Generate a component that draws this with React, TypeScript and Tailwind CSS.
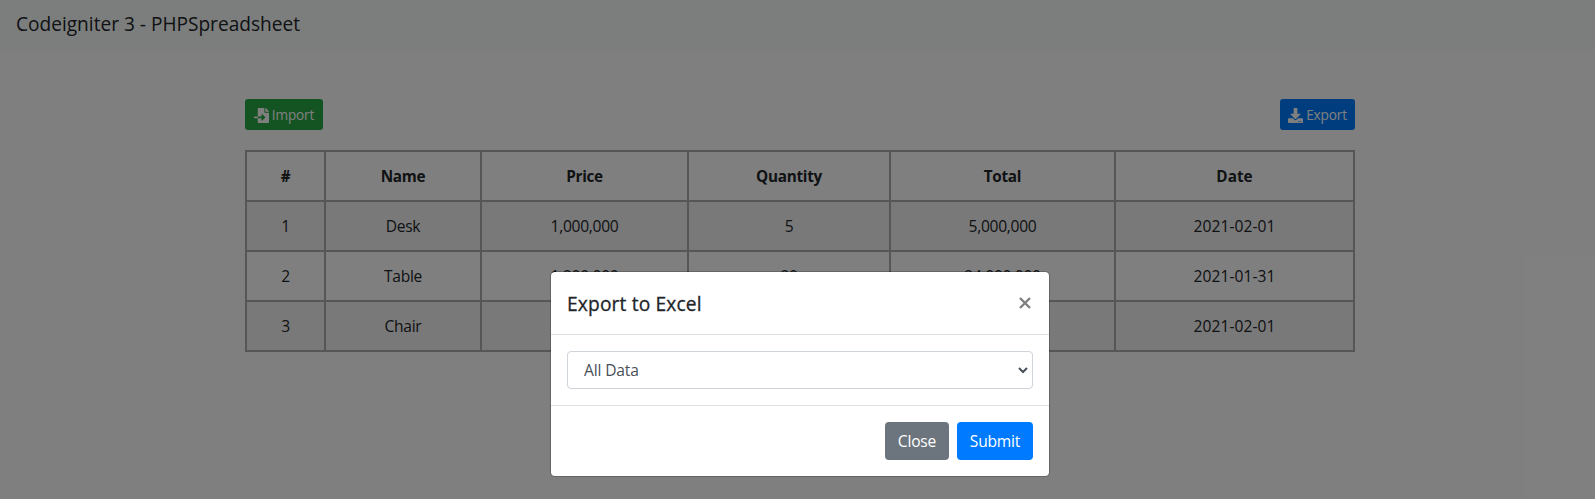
import { FaDownload, FaFileImport } from "react-icons/fa";

const columns = [
  { label: "#", width: "w-[81px]" },
  { label: "Name", width: "w-[156px]" },
  { label: "Price", width: "w-[207px]" },
  { label: "Quantity", width: "w-[202px]" },
  { label: "Total", width: "w-[225px]" },
  { label: "Date", width: "w-[239px]" },
];

const rows = [
  ["1", "Desk", "1,000,000", "5", "5,000,000", "2021-02-01"],
  ["2", "Table", "1,200,000", "20", "24,000,000", "2021-01-31"],
  ["3", "Chair", "", "", "", "2021-02-01"],
];

const cell =
  "h-[50px] border-r-2 border-b-2 border-[#adadad] first:border-l-2 p-0 text-center align-middle last:tracking-[0.05px]";

function DataTable() {
  return (
    <table className="w-[1110px] table-fixed border-separate border-spacing-0 text-[15.6px] leading-6 tracking-[-0.3px]">
      <thead>
        <tr>
          {columns.map((c) => (
            <th key={c.label} className={`${cell} ${c.width} h-[52px] border-t-2 text-[15.3px] font-bold`}>
              {c.label}
            </th>
          ))}
        </tr>
      </thead>
      <tbody>
        {rows.map((r) => (
          <tr key={r[0]} className="odd:bg-[#f2f2f2]">
            {r.map((v, i) => (
              <td key={i} className={cell}>
                {v}
              </td>
            ))}
          </tr>
        ))}
      </tbody>
    </table>
  );
}

function ExportModal() {
  return (
    <div className="absolute inset-0 flex items-start justify-center bg-black/50 pt-[271px]">
      <div className="w-[500px] rounded-[5px] border border-black/20 bg-white bg-clip-padding">
        <div className="flex h-[63px] items-center justify-between border-b border-[#dee2e6] pr-[18px] pl-4">
          <h5 className="pt-[2px] text-[19.2px] leading-[30px] font-medium tracking-[0.15px] [-webkit-text-stroke:0.3px_currentColor]">
            Export to Excel
          </h5>
          <button aria-label="Close" className="text-[#7f7f7f]">
            <svg width="12" height="12" viewBox="0 0 12 12" fill="none" stroke="currentColor" strokeWidth="2.4">
              <path d="M1 1L11 11M11 1L1 11" />
            </svg>
          </button>
        </div>
        <div className="p-4">
          <div className="flex h-[38px] items-center justify-between rounded border border-[#ced4da] pr-[4px] pl-4 text-[15.6px] tracking-[-0.15px] text-[#495057]">
            <span className="pt-[2px]">All Data</span>
            <svg width="10" height="8" viewBox="0 0 10 8" fill="none" stroke="currentColor" strokeWidth="2">
              <path d="M1 2L5 6L9 2" />
            </svg>
          </div>
        </div>
        <div className="flex h-[71px] items-center justify-end gap-2 border-t border-[#dee2e6] px-4 text-[15.6px] tracking-[-0.2px] text-white">
          <button className="h-[38px] w-16 rounded bg-[#6c757d] pt-[2px]">Close</button>
          <button className="h-[38px] w-[76px] rounded bg-[#007bff] pt-[2px]">Submit</button>
        </div>
      </div>
    </div>
  );
}

export default function App() {
  return (
    <div className="h-[499px] w-full overflow-hidden">
      <div className="relative h-[499px] w-[1600px] bg-white font-['Open_Sans','Noto_Sans',sans-serif] text-[#212529]">
        <nav className="flex h-[51px] items-center bg-[#f8fcfa] px-4 pb-[3px] text-[19.1px]">
          Codeigniter 3 - PHPSpreadsheet
        </nav>
        <main className="mx-auto w-[1110px] pt-12">
          <div className="mb-5 flex justify-between text-[13.6px] tracking-[-0.15px] text-white">
            <button className="flex h-[31px] w-[78px] items-center justify-center gap-[3px] rounded-[3px] bg-[#28a745] pt-px">
              <FaFileImport size={15} />
              Import
            </button>
            <button className="flex h-[31px] w-[75px] items-center justify-center gap-[3px] rounded-[3px] bg-[#007bff] pt-px">
              <FaDownload size={15} />
              Export
            </button>
          </div>
          <DataTable />
        </main>
        <ExportModal />
      </div>
    </div>
  );
}
